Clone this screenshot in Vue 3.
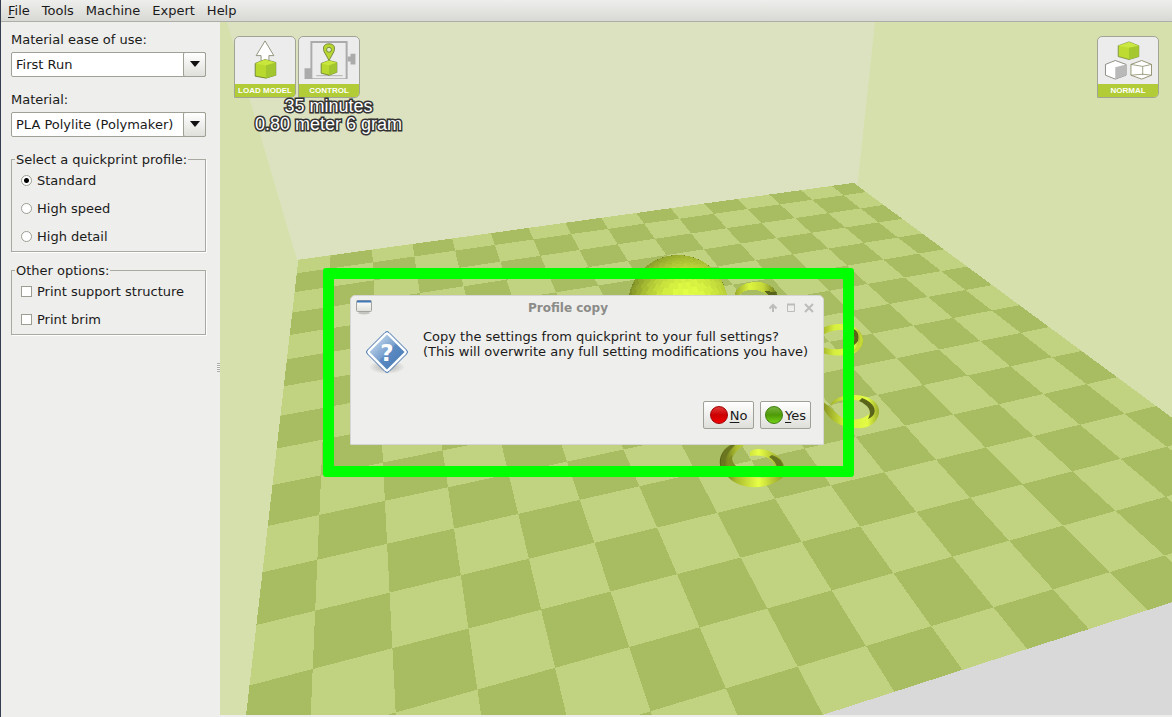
<script setup>
import { ref } from 'vue'

const menus = ['File', 'Tools', 'Machine', 'Expert', 'Help']
const ease = ref('First Run')
const material = ref('PLA Polylite (Polymaker)')
const profiles = ['Standard', 'High speed', 'High detail']
const profile = ref('Standard')
const options = ['Print support structure', 'Print brim']
const chosen = ref([])

// Solves the 8 unknowns of the projective map from grid to screen.
function solve(pairs) {
  const m = []
  for (const [u, v, x, y] of pairs) {
    m.push([u, v, 1, 0, 0, 0, -u * x, -v * x, x])
    m.push([0, 0, 0, u, v, 1, -u * y, -v * y, y])
  }
  for (let c = 0; c < 8; c++) {
    let p = c
    for (let r = c; r < 8; r++) if (Math.abs(m[r][c]) > Math.abs(m[p][c])) p = r
    ;[m[c], m[p]] = [m[p], m[c]]
    for (let r = 0; r < 8; r++) {
      if (r === c) continue
      const f = m[r][c] / m[c][c]
      for (let k = c; k < 9; k++) m[r][k] -= f * m[c][k]
    }
  }
  return m.map((row, n) => row[8] / row[n])
}
const h = solve([
  [0, 0, 330, 268.5],
  [14, 0, 843.7, 195.3],
  [0, 12, 312.7, 669],
  [12, 12, 1072.3, 471.3],
])
function project(u, v) {
  const w = h[6] * u + h[7] * v + 1
  return [(h[0] * u + h[1] * v + h[2]) / w, (h[3] * u + h[4] * v + h[5]) / w]
}
const join = (pts) => pts.map((p) => p.map((n) => n.toFixed(1)).join(',')).join(' ')
const quad = (a, b, c, d) => join([project(a, b), project(c, b), project(c, d), project(a, d)])
const LOW = -0.76
const HIGH = 14.73
const floor = quad(LOW, LOW, HIGH, HIGH)
const tiles = []
for (let i = -1; i < 15; i++) {
  for (let j = -1; j < 15; j++) {
    if ((i + j) % 2 === 0) continue
    tiles.push(quad(Math.max(i, LOW), Math.max(j, LOW), Math.min(i + 1, HIGH), Math.min(j + 1, HIGH)))
  }
}

// Faceted dome of the loaded model, seen from slightly above.
const TILT = 0.6
const facets = []
function dome(r, s) {
  const lat = (r / 24) * Math.PI
  const lon = (s / 40) * Math.PI * 2
  const x = Math.cos(lon) * Math.sin(lat)
  const y = Math.cos(lat)
  const z = Math.sin(lon) * Math.sin(lat)
  return {
    depth: z * Math.cos(TILT) + y * Math.sin(TILT),
    at: [678 + 50 * x, 305 - 50 * (y * Math.cos(TILT) - z * Math.sin(TILT))],
  }
}
for (let r = 0; r < 16; r++) {
  for (let s = 0; s < 40; s++) {
    const mid = dome(r + 0.5, s + 0.5)
    if (mid.depth < 0) continue
    const d = Math.hypot((mid.at[0] - 688) / 60, (mid.at[1] - 300) / 54)
    const k = Math.max(0.42, 1 - d * d * 0.46 + ((r + s) % 2) * 0.02)
    facets.push({
      points: join([dome(r, s).at, dome(r + 1, s).at, dome(r + 1, s + 1).at, dome(r, s + 1).at]),
      fill: `rgb(${Math.round(224 * k)},${Math.round(252 * k)},${Math.round(68 * k)})`,
    })
  }
}
</script>

<template>
  <div class="window">
    <nav class="menubar" aria-label="Main menu">
      <button v-for="m in menus" :key="m" type="button"><span :class="{ mnemonic: m === 'File' }">{{ m[0] }}</span>{{ m.slice(1) }}</button>
    </nav>

    <main class="content">
      <aside class="sidebar">
        <div class="field">
          <label for="ease">Material ease of use:</label>
          <div class="combo">
            <select id="ease" v-model="ease"><option>First Run</option></select>
            <span class="drop"><svg width="10" height="6" viewBox="0 0 10 6"><path d="M0 0h10L5 6z" fill="#111" /></svg></span>
          </div>
        </div>
        <div class="field">
          <label for="material">Material:</label>
          <div class="combo">
            <select id="material" v-model="material"><option>PLA Polylite (Polymaker)</option></select>
            <span class="drop"><svg width="10" height="6" viewBox="0 0 10 6"><path d="M0 0h10L5 6z" fill="#111" /></svg></span>
          </div>
        </div>
        <fieldset>
          <legend>Select a quickprint profile:</legend>
          <label v-for="p in profiles" :key="p" class="choice"><input v-model="profile" type="radio" name="profile" :value="p" />{{ p }}</label>
        </fieldset>
        <fieldset>
          <legend>Other options:</legend>
          <label v-for="o in options" :key="o" class="choice"><input v-model="chosen" type="checkbox" :value="o" />{{ o }}</label>
        </fieldset>
        <span class="grip"></span>
      </aside>

      <section class="viewport">
        <svg class="scene" viewBox="220 22 952 693" preserveAspectRatio="xMinYMin slice" aria-hidden="true">
          <defs>
            <linearGradient id="ringA" x1="0" x2="1" y1="0" y2="0">
              <stop offset="0" stop-color="#98a62a" /><stop offset=".35" stop-color="#dcf43f" /><stop offset=".65" stop-color="#c4d838" /><stop offset="1" stop-color="#606c1c" />
            </linearGradient>
            <linearGradient id="ringB" x1="0" x2="1" y1="0" y2="0">
              <stop offset="0" stop-color="#838f22" /><stop offset=".4" stop-color="#d6ee3e" /><stop offset=".8" stop-color="#e2fb45" /><stop offset="1" stop-color="#9cab2c" />
            </linearGradient>
            <linearGradient id="ringC" x1="0" x2="1" y1="0" y2="0">
              <stop offset="0" stop-color="#535e16" /><stop offset=".25" stop-color="#a9ba2e" /><stop offset=".6" stop-color="#e8ff47" /><stop offset="1" stop-color="#8d9a28" />
            </linearGradient>
          </defs>
          <rect x="220" y="22" width="952" height="693" fill="#d9d9d9" />
          <path d="M220 22H1172V602L857 186 303 264 256 715H220z" fill="#d6e0ac" />
          <path d="M227 22H875L857.7 183 297 259.7z" fill="#dce2c0" />
          <g shape-rendering="crispEdges">
            <polygon :points="floor" fill="#c1d380" />
            <polygon v-for="(t, n) in tiles" :key="n" :points="t" fill="#a8bc62" />
          </g>
          <g shape-rendering="crispEdges">
            <circle cx="678" cy="305" r="50" fill="#737f24" />
            <polygon v-for="(f, n) in facets" :key="n" :points="f.points" :fill="f.fill" />
            <path d="M734 299C734 286 746 282 757 282S777 288 779 299L769 298C767 291 757 290 751 290S739 293 738 299z" fill="url(#ringA)" />
            <path d="M764 291L776 292 778 299 771 298z" fill="#59651a" />
          </g>
          <g>
            <path fill-rule="evenodd" d="M815 342C814 330 826 324 840 324S862 330 863 340C863 351 853 356 839 355.500 824 356 815 351 815 342zM819 342C820 348 830 350 840 349S857 344 857 338C856 332 848 330 840 330S819 334 819 342z" fill="url(#ringB)" />
            <path d="M849 328C856 328 860 333 858 341 856 344 853 346 850 347C856 341 856 335 849 330z" fill="#5b6417" />
            <path d="M859 332Q862 340 857 347L850 353Q862 351 863 341 863 336 859 332z" fill="#c5d936" />
            <path d="M823 402C830 406 836 415 845 419 854 421 868 419 872 410 872 404 860 399 848 400 838 400 834 403 831 406 830 401 840 395 853 395 869 395 880 402 879 413 877 424 868 429 855 428 839 428 825 417 822 404z" fill="url(#ringB)" />
            <path d="M862 398C870 401 877 407 874 414 872 417 870 418 868 419 873 411 868 405 859 401z" fill="#59631a" />
            <path d="M732 444C717 451 716 470 728 477 741 491 768 490 782 478 788 469 783 458 773 453 764 448 753 448 750 452L750 456C761 454 772 457 775 466L775 474C765 480 744 478 734 469 728 461 734 451 746 444z" fill="url(#ringC)" />
            <path d="M731 445C720 452 719 464 723 471L726 468C723 460 727 453 735 445z" fill="#6b7621" />
            <path d="M729 458Q727 466 733 471L737 467Q731 462 732 455z" fill="#7f8c25" />
            <path d="M772 455Q784 459 783 468L777 468Q776 461 769 457z" fill="#68741f" />
          </g>
        </svg>

        <div class="tools">
          <button type="button" class="tool">
            <svg viewBox="0 0 60 48" aria-hidden="true">
              <path d="M30 4L39 19H34V25H26V19H21z" fill="#fff" stroke="#777d62" stroke-width=".8" />
              <path d="M20 27L30 23 41 26V39L31 42 20 40z" fill="#b9d92e" stroke="#5d752b" stroke-width=".8" />
              <path d="M20 27L30 23 41 26 31 29z" fill="#c9e63c" /><path d="M31 29L41 26V39L31 42z" fill="#a1c62f" />
            </svg>
            <span>LOAD MODEL</span>
          </button>
          <button type="button" class="tool">
            <svg viewBox="0 0 60 48" aria-hidden="true">
              <path d="M11 4H49V43H5V32H11zM13 6V42H47V6z" fill="#ababab" fill-rule="evenodd" />
              <path d="M49 20H52V17H57V28H52V25H49z" fill="#ababab" /><path d="M17 39.500H44" stroke="#b0b0b0" />
              <path d="M30 24L25 15C23 9 26 7 30 7S37 9 35 15z" fill="#bad630" stroke="#5d752b" stroke-width=".8" />
              <circle cx="30" cy="13" r="2.500" fill="#e4ecca" stroke="#5d752b" stroke-width=".8" />
              <path d="M22 27L30 24 38 26V36L30 39 22 37z" fill="#b9d92e" stroke="#5d752b" stroke-width=".8" />
              <path d="M22 27L30 24 38 26 30 29z" fill="#c9e63c" /><path d="M30 29L38 26V36L30 39z" fill="#a1c62f" />
            </svg>
            <span>CONTROL</span>
          </button>
        </div>
        <div class="tools right">
          <button type="button" class="tool">
            <svg viewBox="0 0 60 48" aria-hidden="true">
              <path d="M20 9L31 5 41 9V20L31 23 20 20z" fill="#bddb30" stroke="#6f8538" stroke-width=".8" />
              <path d="M20 9L31 5 41 9 31 11z" fill="#cbe842" /><path d="M31 11L41 9V20L31 23z" fill="#a5c82f" />
              <path d="M7 28L17 24 28 28V39L17 43 7 39z" fill="#fff" stroke="#74746a" stroke-width=".8" /><path d="M17 31L28 28V39L17 43z" fill="#b9b9b9" />
              <path d="M33 28L44 24 54 28V39L44 43 33 39z" fill="#fff" stroke="#8b8a68" stroke-width=".9" />
              <path d="M33 28L45 30 54 28M45 30V39M33 39L45 38 54 39" fill="none" stroke="#8b8a68" stroke-width=".8" />
            </svg>
            <span>NORMAL</span>
          </button>
        </div>
        <p class="estimate">35 minutes<br />0.80 meter 6 gram</p>
      </section>
    </main>

    <div class="highlight"></div>

    <section class="dialog" role="dialog" aria-labelledby="dialog-title">
      <header>
        <svg width="16" height="16" viewBox="0 0 16 16" aria-hidden="true">
          <defs><linearGradient id="winpane" x1="0" x2="0" y1="0" y2="1"><stop offset="0" stop-color="#fff" /><stop offset="1" stop-color="#deded9" /></linearGradient></defs>
          <ellipse cx="8" cy="13" rx="6" ry="1.500" fill="#c4c4c1" />
          <rect x=".5" y=".5" width="15" height="11" rx="1" fill="url(#winpane)" stroke="#a3a39f" /><path d="M1 1.500H15" stroke="#4177b5" stroke-width="2" />
        </svg>
        <h1 id="dialog-title">Profile copy</h1>
        <div class="controls">
          <button type="button" aria-label="Shade"><svg width="10" height="10" viewBox="0 0 10 10"><path d="M5 9V2M1.500 5.500L5 2 8.500 5.500" fill="none" stroke="#bcbcba" stroke-width="2" /></svg></button>
          <button type="button" aria-label="Maximize"><svg width="10" height="10" viewBox="0 0 10 10"><path d="M1.500 1.500H8.500V8.500H1.500z" fill="none" stroke="#bcbcba" /><path d="M1 1.500H9" stroke="#bcbcba" stroke-width="2" /></svg></button>
          <button type="button" aria-label="Close"><svg width="10" height="10" viewBox="0 0 10 10"><path d="M1 1L9 9M9 1L1 9" stroke="#bcbcba" stroke-width="2" /></svg></button>
        </div>
      </header>
      <div class="message">
        <svg width="44" height="46" viewBox="0 -1 44 46" aria-hidden="true">
          <defs>
            <linearGradient id="sign" x1="0" x2="1" y1="0" y2="1"><stop offset=".2" stop-color="#b4cce6" /><stop offset=".5" stop-color="#779fcd" /><stop offset=".52" stop-color="#5d8bc2" /><stop offset="1" stop-color="#4377b5" /></linearGradient>
            <radialGradient id="signShade"><stop offset="0" stop-color="#aaa" /><stop offset="1" stop-color="#eeeeec" /></radialGradient>
          </defs>
          <ellipse cx="22" cy="37" rx="18" ry="7" fill="url(#signShade)" />
          <path d="M20 2.500Q22 .5 24 2.500L41.500 20Q43.500 22 41.500 24L24 41.500Q22 43.500 20 41.500L2.500 24Q.5 22 2.500 20z" fill="#fff" stroke="#3b6dad" />
          <path d="M22 4.500L39.500 22 22 39.500 4.500 22z" fill="url(#sign)" />
          <text x="22" y="31" text-anchor="middle" font-family="DejaVu Sans, sans-serif" font-weight="bold" font-size="23" fill="#fff">?</text>
        </svg>
        <p>Copy the settings from quickprint to your full settings?<br />(This will overwrite any full setting modifications you have)</p>
      </div>
      <footer>
        <button type="button"><i class="dot red"></i><span><u>N</u>o</span></button>
        <button type="button"><i class="dot green"></i><span><u>Y</u>es</span></button>
      </footer>
    </section>
  </div>
</template>

<style>
html,
body,
#app {
  height: 100%;
  margin: 0;
}
</style>

<style scoped>
* {
  box-sizing: border-box;
}
.window {
  position: relative;
  display: flex;
  flex-direction: column;
  height: 100%;
  overflow: hidden;
  border-left: 1px solid #333e50;
  background: #eeeeec;
  color: #1a1a1a;
  font: 13px/15px "DejaVu Sans", sans-serif;
}
button,
select,
input {
  margin: 0;
  font: inherit;
  color: inherit;
}
.menubar {
  display: flex;
  flex: none;
  height: 22px;
  padding-left: 1px;
  border-bottom: 1px solid #aeaea8;
  background: linear-gradient(#eeeeec, #d8d8d4);
}
.menubar button {
  padding: 0 6px;
  border: 0;
  background: none;
}
.mnemonic,
u {
  text-decoration: underline;
  text-underline-offset: 2px;
}
.content {
  display: flex;
  flex: 1;
  min-height: 0;
  padding-bottom: 2px;
}
.sidebar {
  position: relative;
  flex: none;
  width: 219px;
  padding: 10px 14px 0 10px;
}
.field {
  margin-bottom: 15px;
}
.field > label {
  display: block;
  margin-bottom: 5px;
}
.combo {
  display: grid;
  grid-template-columns: 1fr 23px;
  height: 25px;
}
.combo select {
  grid-area: 1 / 1 / 2 / 3;
  width: 100%;
  padding: 0 22px 0 4px;
  appearance: none;
  border: 1px solid #a0a096;
  border-radius: 2px;
  background: #fff;
}
.drop {
  grid-area: 1 / 2;
  display: flex;
  align-items: center;
  justify-content: center;
  padding-bottom: 2px;
  border: 1px solid #a0a096;
  border-radius: 2px;
  background: linear-gradient(#fff, #dfdfdb);
  pointer-events: none;
}
fieldset {
  min-width: 0;
  margin: 0 0 11px;
  padding: 0 0 1px;
  border: 1px solid #a9a9a2;
  box-shadow: 1px 1px #fff;
}
legend {
  margin: 0 0 -1px 3px;
  padding: 0 1px;
}
.choice {
  display: flex;
  align-items: center;
  gap: 5px;
  height: 28px;
  padding-left: 9px;
}
.choice input {
  width: 11px;
  height: 11px;
  appearance: none;
  border: 1px solid #9d9d93;
  background: #fff;
}
.choice input[type="radio"] {
  border-radius: 50%;
}
.choice input[type="radio"]:checked {
  background: radial-gradient(circle, #000 0 2px, #fff 3px);
}
.choice input[type="checkbox"]:checked {
  background: #333;
}
.grip {
  position: absolute;
  right: 0;
  top: 341px;
  width: 3px;
  height: 9px;
  background: repeating-linear-gradient(#aaa 0 1px, #f6f6f5 1px 2px);
}
.viewport {
  position: relative;
  flex: 1;
  min-width: 0;
  overflow: hidden;
}
.scene {
  display: block;
  width: 100%;
  height: 100%;
}
.tools {
  position: absolute;
  top: 14px;
  left: 14px;
  display: flex;
  gap: 2px;
}
.tools.right {
  right: 13px;
  left: auto;
}
.tool {
  display: flex;
  flex-direction: column;
  width: 62px;
  height: 62px;
  padding: 0;
  overflow: hidden;
  border: 1px solid #a2a596;
  border-radius: 5px 5px 5px 0;
  background: #ececec;
}
.tool svg {
  display: block;
  width: 60px;
  height: 48px;
}
.tool span {
  flex: 1;
  width: 100%;
  background: #b1cc36;
  color: #fff;
  font: bold 8px/13px "Liberation Sans", sans-serif;
  text-align: center;
}
.estimate {
  position: absolute;
  top: 75px;
  left: 35px;
  margin: 0;
  color: #fff;
  font: 18px/18px "Liberation Sans", sans-serif;
  text-align: center;
  paint-order: stroke fill;
  -webkit-text-stroke: 3px #333;
}
.highlight {
  position: absolute;
  top: 268px;
  left: 322px;
  width: 531px;
  height: 209px;
  border: 11px solid #0f0;
  border-radius: 3px;
}
.dialog {
  position: absolute;
  top: 295px;
  left: 349px;
  width: 474px;
  border: 1px solid #d5d5d5;
  border-radius: 5px 5px 1px 1px;
  background: #eeeeec;
}
.dialog header {
  display: grid;
  grid-template-columns: 26px 1fr 60px;
  align-items: center;
  height: 24px;
  padding: 0 9px 0 5px;
}
h1 {
  margin: 0;
  color: #8b8b88;
  font-size: 12px;
  text-align: center;
}
.controls {
  display: flex;
  justify-content: flex-end;
  gap: 8px;
}
.controls button {
  height: 10px;
  padding: 0;
  border: 0;
  background: none;
}
.controls svg {
  display: block;
}
.message {
  display: flex;
  gap: 14px;
  padding: 9px 0 0 14px;
}
.message p {
  margin: 0;
  white-space: nowrap;
}
.message svg {
  flex: none;
}
.dialog footer {
  display: flex;
  justify-content: flex-end;
  gap: 6px;
  padding: 26px 12px 15px;
}
.dialog footer button {
  display: flex;
  align-items: center;
  justify-content: center;
  gap: 2px;
  min-width: 51px;
  height: 28px;
  padding: 0 3px;
  border: 1px solid #a0a098;
  border-radius: 2px;
  background: linear-gradient(#fff, #dededa);
}
.dot {
  width: 18px;
  height: 18px;
  border-radius: 50%;
}
.red {
  border: 1px solid #a00000;
  background: linear-gradient(#e03a3a, #cc0000 50%, #f00000);
}
.green {
  border: 1px solid #3b7d09;
  background: linear-gradient(#78b340, #4e9a06 50%, #73d216);
}
</style>
